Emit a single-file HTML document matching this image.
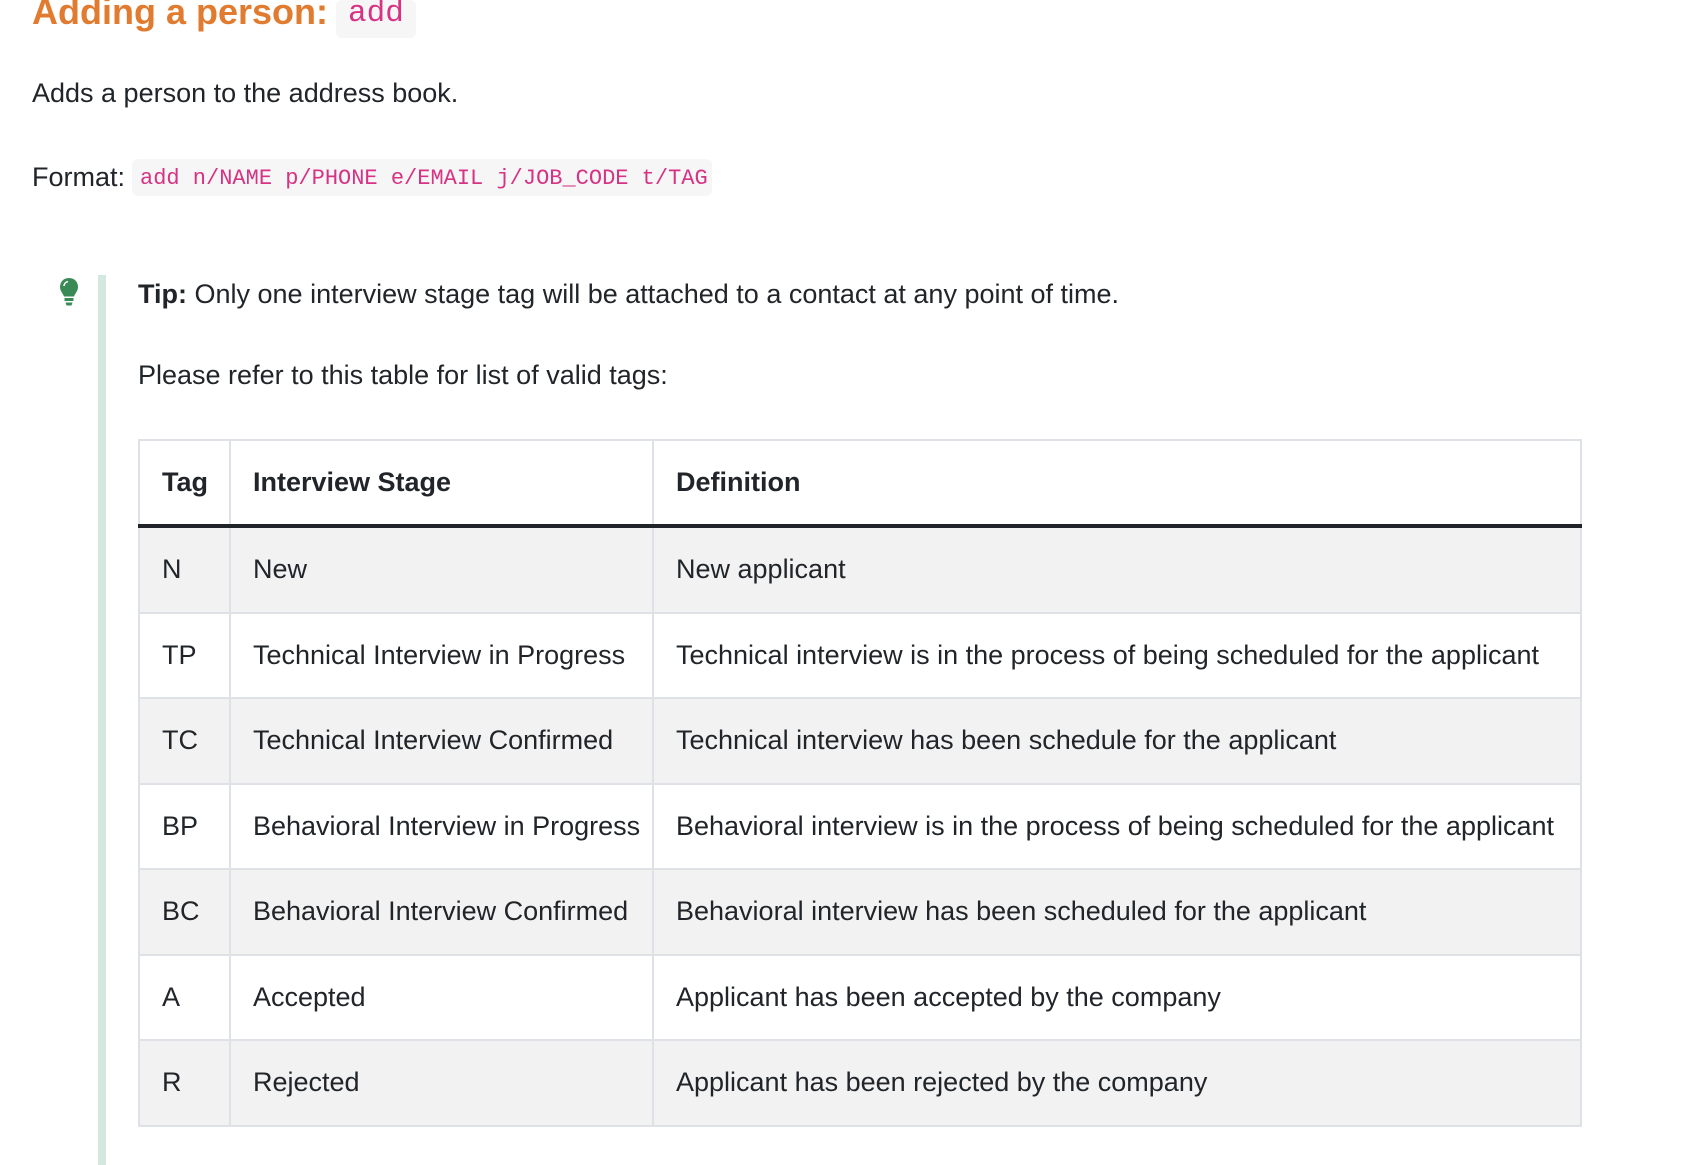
<!DOCTYPE html>
<html><head><meta charset="utf-8"><style>
body{margin:0;width:1688px;height:1165px;background:#fff;position:relative;overflow:hidden;font-family:"Liberation Sans",sans-serif;color:#212529;font-size:27px}
.a{position:absolute;white-space:nowrap;line-height:1}
code{font-family:"Liberation Mono",monospace;color:#d63384;letter-spacing:0}
table{position:absolute;left:138px;top:439px;width:1444px;border-collapse:collapse}
td,th{border:2px solid #dee2e6;padding:0 0 0 22px;text-align:left;height:83.5px}
th{font-weight:bold;height:83px;border-bottom:4px solid #212529}
tr.g td{background:#f2f2f2}
</style></head><body>
<div class="a" style="left:32px;top:-6px;font-size:36px;font-weight:bold;color:#e07b2f">Adding a person:</div>
<div class="a" style="left:336px;top:0;width:80px;height:38px;background:#f6f6f6;border-radius:6px"></div>
<div class="a" style="left:348px;top:-2px;font-size:31px;font-family:'Liberation Mono',monospace;color:#d63384">add</div>
<div class="a" style="left:32px;top:80px">Adds a person to the address book.</div>
<div class="a" style="left:32px;top:164px">Format:</div>
<div class="a" style="left:132px;top:159px;width:580px;height:37px;background:#f6f6f6;border-radius:6px"></div>
<div class="a" style="left:140px;top:166px;font-size:22px"><code>add n/NAME p/PHONE e/EMAIL j/JOB_CODE t/TAG</code></div>
<div class="a" style="left:98px;top:275px;width:8px;height:890px;background:#d5e8e0"></div>
<svg class="a" style="left:58px;top:277px" width="22" height="30" viewBox="0 0 22 30"><path d="M11 1C5 1 2 5.5 2 10c0 4 3 6.5 4 9.5h10c1-3 4-5.5 4-9.5C20 5.5 17 1 11 1z" fill="#3a8a55"/><rect x="6.5" y="21" width="9" height="3" fill="#3a8a55"/><path d="M7.5 25.5h7l-1 3h-5z" fill="#3a8a55"/><path d="M6 9c0-2 1.5-4 4-4.5" stroke="#fff" stroke-width="1.5" fill="none"/></svg>
<div class="a" style="left:138px;top:281px"><b>Tip:</b> Only one interview stage tag will be attached to a contact at any point of time.</div>
<div class="a" style="left:138px;top:362px">Please refer to this table for list of valid tags:</div>
<table>
<colgroup><col style="width:91px"><col style="width:423px"><col></colgroup>
<tr><th>Tag</th><th>Interview Stage</th><th>Definition</th></tr>
<tr class="g"><td>N</td><td>New</td><td>New applicant</td></tr>
<tr><td>TP</td><td>Technical Interview in Progress</td><td>Technical interview is in the process of being scheduled for the applicant</td></tr>
<tr class="g"><td>TC</td><td>Technical Interview Confirmed</td><td>Technical interview has been schedule for the applicant</td></tr>
<tr><td>BP</td><td>Behavioral Interview in Progress</td><td>Behavioral interview is in the process of being scheduled for the applicant</td></tr>
<tr class="g"><td>BC</td><td>Behavioral Interview Confirmed</td><td>Behavioral interview has been scheduled for the applicant</td></tr>
<tr><td>A</td><td>Accepted</td><td>Applicant has been accepted by the company</td></tr>
<tr class="g"><td>R</td><td>Rejected</td><td>Applicant has been rejected by the company</td></tr>
</table>
</body></html>
